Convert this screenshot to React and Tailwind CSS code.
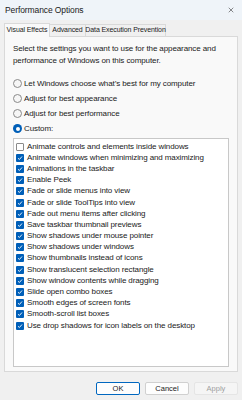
import { X } from 'lucide-react';

const effects = [
  ['Animate controls and elements inside windows', false],
  ['Animate windows when minimizing and maximizing', true],
  ['Animations in the taskbar', true],
  ['Enable Peek', true],
  ['Fade or slide menus into view', true],
  ['Fade or slide ToolTips into view', true],
  ['Fade out menu items after clicking', true],
  ['Save taskbar thumbnail previews', true],
  ['Show shadows under mouse pointer', true],
  ['Show shadows under windows', true],
  ['Show thumbnails instead of icons', true],
  ['Show translucent selection rectangle', true],
  ['Show window contents while dragging', true],
  ['Slide open combo boxes', true],
  ['Smooth edges of screen fonts', true],
  ['Smooth-scroll list boxes', true],
  ['Use drop shadows for icon labels on the desktop', true],
];

const radios = [
  ['Let Windows choose what’s best for my computer', false],
  ['Adjust for best appearance', false],
  ['Adjust for best performance', false],
  ['Custom:', true],
];

const Radio = ({ on }) =>
  on ? (
    <span className="flex h-[9px] w-[9px] items-center justify-center rounded-full bg-[#005fb8]">
      <span className="h-[4px] w-[4px] rounded-full bg-white" />
    </span>
  ) : (
    <span className="h-[9px] w-[9px] rounded-full border border-[#8a8a8a] bg-[#f6f6f6]" />
  );

const Check = ({ on }) =>
  on ? (
    <span className="flex h-[8px] w-[8px] items-center justify-center rounded-[1px] bg-[#005fb8]">
      <svg width="6" height="6" viewBox="0 0 6 6" fill="none">
        <path d="M1 3.2 2.4 4.5 5 1.5" stroke="white" strokeWidth="0.9" />
      </svg>
    </span>
  ) : (
    <span className="h-[8px] w-[8px] rounded-[1px] border border-[#8a8a8a] bg-white" />
  );

export default function App() {
  return (
    <div
      className="flex h-[400px] w-[242px] flex-col bg-[#f0f0f0] text-[#1a1a1a]"
      style={{ fontFamily: '"Liberation Sans", Arial, sans-serif' }}
    >
      <div className="flex h-[20px] shrink-0 items-center justify-between bg-[#eff4f9] pl-[5px] pr-[7px]">
        <span className="text-[8.5px] tracking-[-0.1px]">Performance Options</span>
        <X className="h-[8px] w-[8px]" strokeWidth={1.5} />
      </div>

      <div className="px-[4px] pt-[2px]">
        <div className="flex h-[14px] items-end whitespace-nowrap text-[7px] tracking-[-0.1px]">
          <div className="-mb-px flex h-[14px] w-[46px] items-center justify-center border border-b-0 border-[#d9d9d9] bg-[#f9f9f9]">
            Visual Effects
          </div>
          <div className="flex h-[12px] w-[36px] items-center justify-center border-r border-t border-[#d9d9d9]">
            Advanced
          </div>
          <div className="flex h-[12px] w-[80px] items-center justify-center border-r border-t border-[#d9d9d9]">
            Data Execution Prevention
          </div>
        </div>

        <div className="flex h-[336px] flex-col border border-[#d9d9d9] bg-[#f9f9f9] pl-[8px] pr-[8px] pt-[6px]">
          <p className="text-[8px] leading-[12px] tracking-[-0.1px]">
            Select the settings you want to use for the appearance and performance of Windows on this computer.
          </p>
          <div className="mt-[9px] flex flex-col">
            {radios.map(([label, on]) => (
              <div key={label} className="flex h-[15px] items-center gap-[2px] text-[8px] tracking-[-0.1px]">
                <Radio on={on} />
                <span>{label}</span>
              </div>
            ))}
          </div>
          <div className="mt-[2px] h-[229px] border border-[#c8c8c8] bg-white pt-[2px]">
            {effects.map(([label, on]) => (
              <div key={label} className="flex h-[11.2px] items-center gap-[3px] pl-[2px] text-[8px] tracking-[-0.1px]">
                <Check on={on} />
                <span className="whitespace-nowrap">{label}</span>
              </div>
            ))}
          </div>
        </div>
      </div>

      <div className="mt-[10px] flex justify-end gap-[5px] pr-[4px] text-[7.5px]">
        <button className="h-[13px] w-[44px] rounded-[2px] border border-[#0067c0] bg-[#fdfdfd]">OK</button>
        <button className="h-[13px] w-[44px] rounded-[2px] border border-[#d0d0d0] bg-[#fdfdfd]">Cancel</button>
        <button className="h-[13px] w-[44px] rounded-[2px] border border-[#e5e5e5] bg-[#f5f5f5] text-[#a0a0a0]">
          Apply
        </button>
      </div>
    </div>
  );
}
